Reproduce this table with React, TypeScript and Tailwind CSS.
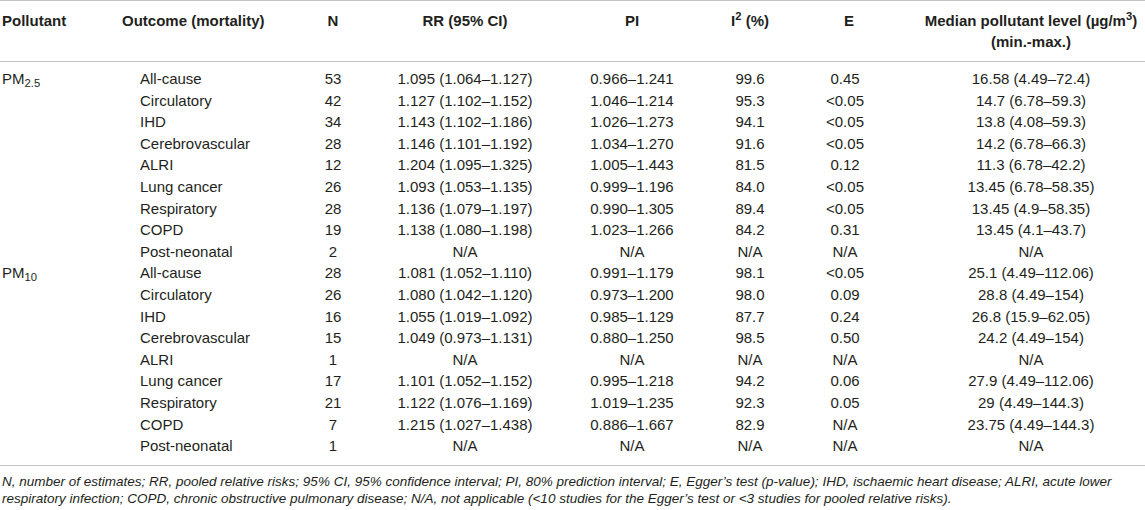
import React from "react";

type Row = {
  pollutant?: React.ReactNode;
  outcome: string;
  n: string;
  rr: string;
  pi: string;
  i2: string;
  e: string;
  median: string;
};

const rows: Row[] = [
  { pollutant: <>PM<sub>2.5</sub></>, outcome: "All-cause", n: "53", rr: "1.095 (1.064–1.127)", pi: "0.966–1.241", i2: "99.6", e: "0.45", median: "16.58 (4.49–72.4)" },
  { outcome: "Circulatory", n: "42", rr: "1.127 (1.102–1.152)", pi: "1.046–1.214", i2: "95.3", e: "<0.05", median: "14.7 (6.78–59.3)" },
  { outcome: "IHD", n: "34", rr: "1.143 (1.102–1.186)", pi: "1.026–1.273", i2: "94.1", e: "<0.05", median: "13.8 (4.08–59.3)" },
  { outcome: "Cerebrovascular", n: "28", rr: "1.146 (1.101–1.192)", pi: "1.034–1.270", i2: "91.6", e: "<0.05", median: "14.2 (6.78–66.3)" },
  { outcome: "ALRI", n: "12", rr: "1.204 (1.095–1.325)", pi: "1.005–1.443", i2: "81.5", e: "0.12", median: "11.3 (6.78–42.2)" },
  { outcome: "Lung cancer", n: "26", rr: "1.093 (1.053–1.135)", pi: "0.999–1.196", i2: "84.0", e: "<0.05", median: "13.45 (6.78–58.35)" },
  { outcome: "Respiratory", n: "28", rr: "1.136 (1.079–1.197)", pi: "0.990–1.305", i2: "89.4", e: "<0.05", median: "13.45 (4.9–58.35)" },
  { outcome: "COPD", n: "19", rr: "1.138 (1.080–1.198)", pi: "1.023–1.266", i2: "84.2", e: "0.31", median: "13.45 (4.1–43.7)" },
  { outcome: "Post-neonatal", n: "2", rr: "N/A", pi: "N/A", i2: "N/A", e: "N/A", median: "N/A" },
  { pollutant: <>PM<sub>10</sub></>, outcome: "All-cause", n: "28", rr: "1.081 (1.052–1.110)", pi: "0.991–1.179", i2: "98.1", e: "<0.05", median: "25.1 (4.49–112.06)" },
  { outcome: "Circulatory", n: "26", rr: "1.080 (1.042–1.120)", pi: "0.973–1.200", i2: "98.0", e: "0.09", median: "28.8 (4.49–154)" },
  { outcome: "IHD", n: "16", rr: "1.055 (1.019–1.092)", pi: "0.985–1.129", i2: "87.7", e: "0.24", median: "26.8 (15.9–62.05)" },
  { outcome: "Cerebrovascular", n: "15", rr: "1.049 (0.973–1.131)", pi: "0.880–1.250", i2: "98.5", e: "0.50", median: "24.2 (4.49–154)" },
  { outcome: "ALRI", n: "1", rr: "N/A", pi: "N/A", i2: "N/A", e: "N/A", median: "N/A" },
  { outcome: "Lung cancer", n: "17", rr: "1.101 (1.052–1.152)", pi: "0.995–1.218", i2: "94.2", e: "0.06", median: "27.9 (4.49–112.06)" },
  { outcome: "Respiratory", n: "21", rr: "1.122 (1.076–1.169)", pi: "1.019–1.235", i2: "92.3", e: "0.05", median: "29 (4.49–144.3)" },
  { outcome: "COPD", n: "7", rr: "1.215 (1.027–1.438)", pi: "0.886–1.667", i2: "82.9", e: "N/A", median: "23.75 (4.49–144.3)" },
  { outcome: "Post-neonatal", n: "1", rr: "N/A", pi: "N/A", i2: "N/A", e: "N/A", median: "N/A" },
];

export default function App() {
  return (
    <div
      className="w-[1145px] h-[510px] bg-white text-[#231f20] overflow-hidden"
      style={{ fontFamily: '"Liberation Sans", Arial, sans-serif' }}
    >
      <table className="w-full table-fixed border-t border-[#c4c4c4] text-[15px]">
        <colgroup>
          <col className="w-[120px]" />
          <col className="w-[180px]" />
          <col className="w-[66px]" />
          <col className="w-[198px]" />
          <col className="w-[136px]" />
          <col className="w-[100px]" />
          <col className="w-[90px]" />
          <col className="w-[255px]" />
        </colgroup>
        <thead>
          <tr className="border-b border-[#c4c4c4] align-top font-bold leading-[20.5px]">
            <th className="pl-[2px] pt-[10px] pb-[9px] text-left font-bold">Pollutant</th>
            <th className="pl-[2px] pt-[10px] pb-[9px] text-left font-bold">Outcome (mortality)</th>
            <th className="pt-[10px] pb-[9px] text-center font-bold">N</th>
            <th className="pt-[10px] pb-[9px] text-center font-bold">RR (95% CI)</th>
            <th className="pt-[10px] pb-[9px] text-center font-bold">PI</th>
            <th className="pt-[10px] pb-[9px] text-center font-bold">
              I<sup>2</sup> (%)
            </th>
            <th className="pl-[8px] pt-[10px] pb-[9px] text-center font-bold">E</th>
            <th className="pl-[27px] pt-[10px] pb-[9px] text-center font-bold">
              Median pollutant level (µg/m<sup>3</sup>)
              <br />
              (min.-max.)
            </th>
          </tr>
        </thead>
        <tbody className="leading-[21.6px]">
          {rows.map((r, i) => {
            const pad =
              i === 0 ? "pt-[6px]" : i === rows.length - 1 ? "pb-[8px]" : "";
            return (
              <tr key={i} className={i === rows.length - 1 ? "border-b border-[#c4c4c4]" : ""}>
                <td className={`pl-[2px] p-0 ${pad}`}>{r.pollutant}</td>
                <td className={`pl-[20px] ${pad}`}>{r.outcome}</td>
                <td className={`text-center ${pad}`}>{r.n}</td>
                <td className={`text-center ${pad}`}>{r.rr}</td>
                <td className={`text-center ${pad}`}>{r.pi}</td>
                <td className={`text-center ${pad}`}>{r.i2}</td>
                <td className={`text-center ${pad}`}>{r.e}</td>
                <td className={`pl-[27px] text-center ${pad}`}>{r.median}</td>
              </tr>
            );
          })}
        </tbody>
      </table>
      <p className="pl-[2px] pt-[7px] text-[13.5px] italic leading-[17px]">
        N, number of estimates; RR, pooled relative risks; 95% CI, 95% confidence interval; PI, 80% prediction
        interval; E, Egger’s test (p-value); IHD, ischaemic heart disease; ALRI, acute lower
        <br />
        respiratory infection; COPD, chronic obstructive pulmonary disease; N/A, not applicable (&lt;10 studies for
        the Egger’s test or &lt;3 studies for pooled relative risks).
      </p>
    </div>
  );
}
